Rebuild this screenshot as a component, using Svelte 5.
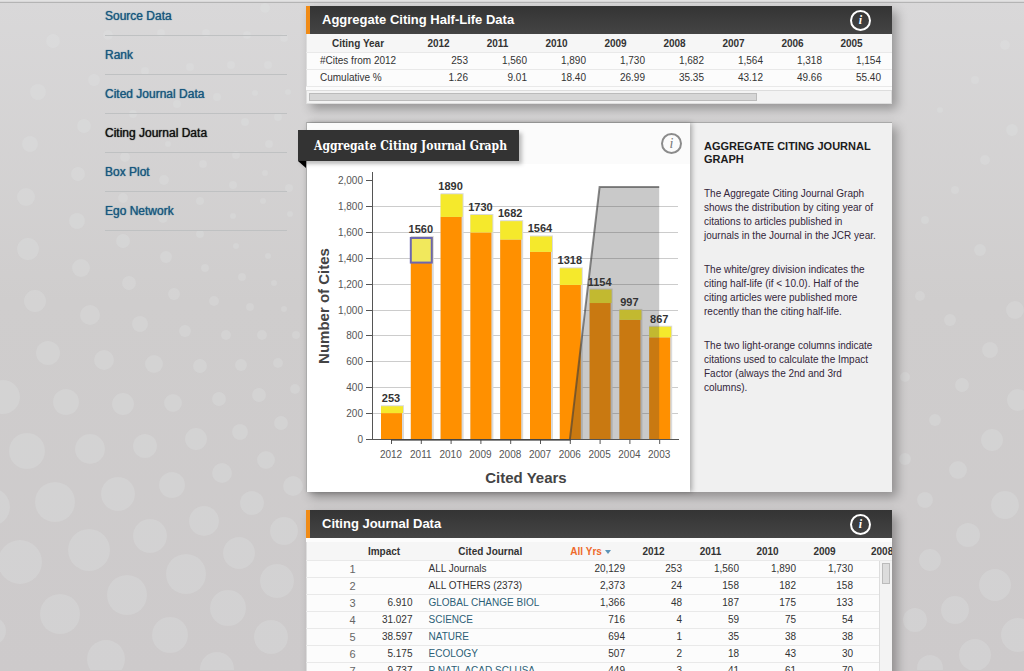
<script lang="ts">
	const nav = ['Source Data', 'Rank', 'Cited Journal Data', 'Citing Journal Data', 'Box Plot', 'Ego Network'];
	let current = $state('Citing Journal Data');

	const halfLife = [
		{ year: 2012, cites: '253', pct: '1.26' },
		{ year: 2011, cites: '1,560', pct: '9.01' },
		{ year: 2010, cites: '1,890', pct: '18.40' },
		{ year: 2009, cites: '1,730', pct: '26.99' },
		{ year: 2008, cites: '1,682', pct: '35.35' },
		{ year: 2007, cites: '1,564', pct: '43.12' },
		{ year: 2006, cites: '1,318', pct: '49.66' },
		{ year: 2005, cites: '1,154', pct: '55.40' }
	];

	const bars = [
		{ year: 2012, total: 253, other: 200 },
		{ year: 2011, total: 1560, other: 1370 },
		{ year: 2010, total: 1890, other: 1715 },
		{ year: 2009, total: 1730, other: 1595 },
		{ year: 2008, total: 1682, other: 1540 },
		{ year: 2007, total: 1564, other: 1445 },
		{ year: 2006, total: 1318, other: 1190 },
		{ year: 2005, total: 1154, other: 1050 },
		{ year: 2004, total: 997, other: 920 },
		{ year: 2003, total: 867, other: 785 }
	];
	let selectedYear = $state(2011);

	const journals = [
		{ impact: '', name: 'ALL Journals', link: false, values: ['20,129', '253', '1,560', '1,890', '1,730'] },
		{ impact: '', name: 'ALL OTHERS (2373)', link: false, values: ['2,373', '24', '158', '182', '158'] },
		{ impact: '6.910', name: 'GLOBAL CHANGE BIOL', link: true, values: ['1,366', '48', '187', '175', '133'] },
		{ impact: '31.027', name: 'SCIENCE', link: true, values: ['716', '4', '59', '75', '54'] },
		{ impact: '38.597', name: 'NATURE', link: true, values: ['694', '1', '35', '38', '38'] },
		{ impact: '5.175', name: 'ECOLOGY', link: true, values: ['507', '2', '18', '43', '30'] },
		{ impact: '9.737', name: 'P NATL ACAD SCI USA', link: true, values: ['449', '3', '41', '61', '70'] }
	];

	// chart geometry
	const axisX = 65;
	const baseY = 316;
	const step = 29.8;
	const ticks = Array.from({ length: 11 }, (_, i) => i * 200);
	const x = (i: number) => axisX + 19 + i * step;
	const y = (v: number) => baseY - v * 0.1295;

	// background bubbles: cx, cy, r
	const dots = [
		[53, 41, 7], [38, 92, 8], [94, 80, 6], [84, 126, 7], [30, 144, 8], [78, 174, 7], [26, 197, 9], [77, 221, 8],
		[108, 35, 5], [161, 33, 4], [206, 33, 4], [247, 35, 4], [284, 38, 4], [145, 71, 4], [190, 67, 4], [231, 65, 4], [268, 65, 4],
		[133, 114, 4], [177, 104, 4], [217, 97, 4], [255, 93, 3], [288, 92, 3], [245, 122, 4], [278, 117, 4], [168, 144, 3],
		[125, 157, 5], [236, 155, 4], [269, 144, 4], [164, 180, 5], [203, 164, 4], [265, 173, 3], [233, 185, 4], [289, 188, 4],
		[123, 198, 5], [200, 201, 4], [263, 201, 3], [290, 214, 3], [233, 216, 3], [163, 218, 5], [200, 234, 4], [265, 8, 5],
		[28, 249, 11], [81, 268, 9], [123, 241, 7], [166, 257, 6], [205, 268, 4], [236, 246, 3], [268, 256, 3],
		[35, 301, 11], [90, 315, 10], [129, 283, 7], [174, 294, 6], [214, 301, 5], [242, 277, 4], [250, 307, 4], [284, 309, 3], [274, 283, 3],
		[48, 353, 12], [104, 360, 10], [140, 324, 8], [185, 331, 6], [226, 335, 5], [262, 335, 5], [296, 335, 4],
		[3, 397, 17], [66, 402, 13], [123, 404, 11], [154, 364, 9], [200, 366, 7], [241, 365, 6], [278, 363, 5],
		[27, 451, 18], [90, 449, 15], [145, 446, 12], [173, 403, 9], [219, 399, 7], [259, 395, 7], [295, 389, 5],
		[-9, 507, 19], [55, 502, 20], [118, 494, 17], [172, 485, 13], [196, 439, 11], [240, 432, 8], [281, 423, 7],
		[20, 562, 22], [89, 550, 21], [150, 536, 17], [204, 521, 15], [222, 473, 10], [266, 460, 9], [293, 486, 10],
		[60, 614, 20], [127, 595, 20], [186, 574, 20], [239, 553, 16], [252, 503, 12], [284, 531, 14],
		[-8, 631, 14], [106, 659, 19], [170, 635, 18], [228, 608, 18], [277, 581, 17], [271, 637, 17], [217, 669, 17],
		[905, 377, 5], [920, 296, 5], [905, 459, 6], [935, 420, 6], [962, 385, 7], [990, 350, 8], [1015, 310, 9],
		[925, 500, 8], [958, 470, 9], [992, 440, 11], [1018, 400, 11], [930, 560, 11], [968, 535, 12], [1005, 505, 14],
		[915, 620, 12], [955, 610, 14], [995, 585, 16], [930, 668, 13], [975, 655, 16], [1018, 635, 17],
		[925, 220, 4], [955, 190, 4], [985, 160, 5], [1012, 130, 6], [940, 110, 3], [975, 80, 4], [1005, 45, 5], [950, 320, 6], [980, 250, 6]
	];
</script>

{#snippet info(label: string)}
	<button class="info" type="button" aria-label={label}>i</button>
{/snippet}

<div class="page">
	<svg class="bubbles" aria-hidden="true">
		{#each dots as [cx, cy, r]}
			<circle {cx} {cy} {r} />
		{/each}
	</svg>

	<nav>
		<ul>
			{#each nav as item}
				<li>
					<a href="#top" class:active={item === current} onclick={() => (current = item)}>{item}</a>
				</li>
			{/each}
		</ul>
	</nav>

	<main>
		<section class="panel">
			<header>
				<h2>Aggregate Citing Half-Life Data</h2>
				{@render info('About half-life data')}
			</header>
			<table class="half-life">
				<colgroup>
					<col />
					{#each halfLife as _}<col class="year" />{/each}
					<col class="spacer" />
				</colgroup>
				<thead>
					<tr>
						<th>Citing Year</th>
						{#each halfLife as h}<th>{h.year}</th>{/each}
						<td></td>
					</tr>
				</thead>
				<tbody>
					<tr>
						<td class="label">#Cites from 2012</td>
						{#each halfLife as h}<td>{h.cites}</td>{/each}
						<td></td>
					</tr>
					<tr>
						<td class="label">Cumulative %</td>
						{#each halfLife as h}<td>{h.pct}</td>{/each}
						<td></td>
					</tr>
				</tbody>
			</table>
			<div class="hscroll"><div class="thumb"></div></div>
		</section>

		<section class="graph">
			<div class="chart">
				<div class="chart-head">
					<h2 class="ribbon">Aggregate Citing Journal Graph</h2>
					{@render info('About this graph')}
				</div>
				<svg viewBox="0 41 383 328" role="img" aria-label="Number of cites by cited year">
					{#each ticks as t}
						{#if t > 0 && t < 2000}
							<line class="grid" x1={axisX} x2="371" y1={Math.round(y(t)) + 0.5} y2={Math.round(y(t)) + 0.5} />
						{/if}
						<line class="axis" x1={axisX - 6} x2={axisX} y1={Math.round(y(t)) + 0.5} y2={Math.round(y(t)) + 0.5} />
						<text class="tick" x={axisX - 9} y={y(t) + 4} text-anchor="end">{t.toLocaleString('en-US')}</text>
					{/each}

					{#each bars as b, i}
						<!-- svelte-ignore a11y_click_events_have_key_events, a11y_no_static_element_interactions -->
						<g class="bar" onclick={() => (selectedYear = b.year)}>
							<rect class="shade" x={x(i) - 10} y={y(b.total) - 1} width="23" height={baseY - y(b.total) + 1} />
							<rect class="other" x={x(i) - 10} y={y(b.other)} width="21" height={baseY - y(b.other)} />
							<rect class="recent" x={x(i) - 10} y={y(b.total)} width="22" height={y(b.other) - y(b.total)} />
							{#if b.year === selectedYear}
								<rect class="selected" x={x(i) - 10} y={y(b.total) + 1} width="21" height={y(b.other) - y(b.total)} />
							{/if}
						</g>
						<line class="axis" x1={x(i) + 0.5} x2={x(i) + 0.5} y1={baseY} y2={baseY + 5} />
						<text class="tick" x={x(i)} y={baseY + 19} text-anchor="middle">{b.year}</text>
					{/each}

					<line class="axis" x1={axisX + 0.5} x2={axisX + 0.5} y1="49" y2={baseY + 1} />
					<line class="axis" x1={axisX} x2="372" y1={baseY + 0.5} y2={baseY + 0.5} />

					<polygon class="area" points="{x(6)},{baseY} {x(7)},64 {x(9)},64 {x(9)},{baseY}" />
					<polyline class="edge" points="{x(0)},{baseY + 1} {x(6)},{baseY + 1} {x(7)},64 {x(9)},64" />

					{#each bars as b, i}
						<text class="value" x={x(i)} y={y(b.total) - 4} text-anchor="middle">{b.total}</text>
					{/each}

					<text class="title" x="219" y="360" text-anchor="middle">Cited Years</text>
					<text class="title" transform="translate(22 183) rotate(-90)" text-anchor="middle">Number of Cites</text>
				</svg>
			</div>
			<aside>
				<h3>AGGREGATE CITING JOURNAL GRAPH</h3>
				<p>
					The Aggregate Citing Journal Graph shows the distribution by citing year of citations to articles
					published in journals in the Journal in the JCR year.
				</p>
				<p>
					The white/grey division indicates the citing half-life (if &lt; 10.0). Half of the citing articles were
					published more recently than the citing half-life.
				</p>
				<p>
					The two light-orange columns indicate citations used to calculate the Impact Factor (always the 2nd and
					3rd columns).
				</p>
			</aside>
		</section>

		<section class="panel">
			<header>
				<h2>Citing Journal Data</h2>
				{@render info('About citing journal data')}
			</header>
			<table class="journals">
				<colgroup>
					<col class="rank-col" />
					<col class="num" />
					<col />
					<col class="num" />
					<col class="num" />
					<col class="num" />
					<col class="num" />
					<col class="num" />
					<col class="cut" />
				</colgroup>
				<thead>
					<tr>
						<td></td>
						<th>Impact</th>
						<th>Cited Journal</th>
						<th class="sorted">All Yrs <span class="arrow"></span></th>
						<th>2012</th>
						<th>2011</th>
						<th>2010</th>
						<th>2009</th>
						<th class="cut-head">2008</th>
					</tr>
				</thead>
				<tbody>
					{#each journals as j, i}
						<tr>
							<td class="rank">{i + 1}</td>
							<td>{j.impact}</td>
							<td class="name">
								{#if j.link}<a href="#top">{j.name}</a>{:else}{j.name}{/if}
							</td>
							{#each j.values as v}<td>{v}</td>{/each}
							<td></td>
						</tr>
					{/each}
				</tbody>
			</table>
			<div class="vscroll"><div class="thumb"></div></div>
		</section>
	</main>
</div>

<style>
	:global(body) {
		margin: 0;
	}

	.page {
		position: relative;
		display: flex;
		align-items: flex-start;
		gap: 19px;
		box-sizing: border-box;
		height: 100vh;
		overflow: hidden;
		padding: 0 132px 0 105px;
		border-top: 1px solid #e2e2e2;
		background: linear-gradient(#d9d8d9, #cfcdcd 45%, #cdcacb);
		font-family: 'Liberation Sans', Arial, sans-serif;
		font-size: 10px;
		color: #333;
	}

	.page::before {
		content: '';
		position: absolute;
		top: 1px;
		left: 0;
		right: 0;
		height: 1px;
		background: #b4b4b4;
	}

	.bubbles {
		position: absolute;
		inset: -1px 0 0 0;
		width: 100%;
		height: 100%;
		fill: rgba(226, 233, 231, 0.25);
	}

	nav {
		position: relative;
		flex: 0 0 182px;
	}

	ul {
		margin: 0;
		padding: 0;
		list-style: none;
	}

	li {
		height: 38px;
		border-bottom: 1px solid #bfc1c2;
	}

	li:first-child {
		height: 34px;
	}

	li a {
		display: block;
		padding-top: 12px;
		font-size: 12px;
		line-height: 14px;
		color: #17587f;
		text-decoration: none;
		text-shadow: 0 0 1px currentColor;
	}

	li:first-child a {
		padding-top: 8px;
	}

	li a.active {
		color: #111;
	}

	main {
		position: relative;
		flex: 1;
		min-width: 0;
		display: flex;
		flex-direction: column;
		gap: 18px;
		padding-top: 5px;
	}

	.panel {
		position: relative;
		overflow: hidden;
		background: #fcfcfc;
		box-shadow: 5px 5px 10px rgba(0, 0, 0, 0.3);
	}

	header {
		display: flex;
		align-items: center;
		justify-content: space-between;
		height: 28px;
		padding: 0 21px 0 12px;
		border-left: 4px solid #f08b16;
		background: linear-gradient(#343434, #444);
	}

	h2 {
		margin: 0;
		font-size: 13px;
		line-height: 16px;
		color: #fff;
	}

	.info {
		box-sizing: border-box;
		width: 21px;
		height: 21px;
		padding: 0;
		border: 2px solid #fff;
		border-radius: 50%;
		background: none;
		color: #fff;
		font: italic bold 12px/16px 'Liberation Serif', 'Times New Roman', serif;
		cursor: pointer;
	}

	table {
		width: 100%;
		table-layout: fixed;
		border-collapse: collapse;
		border-left: 1px solid #ddd;
	}

	th,
	td {
		height: 16px;
		padding: 0;
		border-bottom: 1px solid #e9e9e9;
		line-height: 16px;
		text-align: right;
		white-space: nowrap;
	}

	th {
		padding-top: 2px;
		text-align: center;
	}

	thead {
		background: #f6f6f6;
	}

	.half-life .year {
		width: 59px;
	}

	.half-life .spacer {
		width: 11px;
	}

	.half-life .label {
		padding-left: 13px;
		text-align: left;
	}

	.hscroll {
		margin-top: 3px;
		padding: 2px 0 2px 2px;
		border: 1px solid #ddd;
		background: #f3f3f3;
	}

	.hscroll .thumb {
		box-sizing: border-box;
		width: 77%;
		height: 8px;
		border: 1px solid #bbb;
		background: #d6d6d6;
	}

	.graph {
		display: flex;
		border-top: 1px solid #a9a9a9;
		border-left: 1px solid #b5b5b5;
		background: #f0f0f0;
		box-shadow: 5px 5px 10px rgba(0, 0, 0, 0.3);
	}

	.chart {
		flex: 1;
		min-width: 0;
		background: #fff;
		box-shadow: 2px 0 5px rgba(0, 0, 0, 0.3);
	}

	.chart-head {
		display: flex;
		align-items: center;
		justify-content: space-between;
		height: 41px;
		padding-right: 8px;
		background: #fbfbfb;
	}

	.chart-head .info {
		border-color: #8b8b8b;
		color: #777;
		font-size: 14px;
		font-weight: normal;
	}

	.ribbon {
		position: relative;
		margin: 4px 0 0 -9px;
		padding: 8px 12px 7px 16px;
		background: #333;
		box-shadow: 3px 3px 4px rgba(0, 0, 0, 0.25);
		font-family: 'DejaVu Serif Condensed', 'DejaVu Serif', serif;
		font-size: 12px;
	}

	.ribbon::after {
		content: '';
		position: absolute;
		top: 100%;
		left: 0;
		border-top: 7px solid #000;
		border-left: 8px solid transparent;
	}

	.chart svg {
		display: block;
		width: 100%;
		height: auto;
	}

	.grid {
		stroke: #ccc;
	}

	.axis {
		stroke: #555;
	}

	.tick {
		font-size: 10px;
		fill: #555;
	}

	.value {
		font-size: 11px;
		font-weight: bold;
		fill: #333;
	}

	.title {
		font-size: 15px;
		font-weight: bold;
		fill: #444;
	}

	.bar {
		cursor: pointer;
	}

	.shade {
		fill: #dadada;
	}

	.other {
		fill: #ff9000;
	}

	.recent {
		fill: #f5e92c;
	}

	.selected {
		fill: #f1e85c;
		stroke: #6c66b0;
		stroke-width: 2;
	}

	.area {
		fill: rgba(60, 60, 60, 0.28);
	}

	.edge {
		fill: none;
		stroke: rgba(60, 60, 60, 0.6);
		stroke-width: 2;
	}

	aside {
		box-sizing: border-box;
		flex: 0 0 202px;
		padding: 17px 12px 0 14px;
		color: #33263a;
	}

	h3 {
		margin: 0 0 21px;
		font-size: 11px;
		line-height: 13px;
		color: #1c1c1c;
	}

	p {
		margin: 0 0 20px;
		line-height: 14px;
	}

	.journals {
		border-top: 4px solid #fcfcfc;
	}

	.journals .rank-col {
		width: 49px;
	}

	.journals .num {
		width: 57px;
	}

	.journals .cut {
		width: 39px;
	}

	.journals .cut-head {
		padding-left: 18px;
		text-align: left;
	}

	.journals tbody td {
		padding-top: 0;
	}

	.journals .rank {
		font-size: 11px;
		color: #666;
	}

	.journals .name {
		padding-left: 16px;
		text-align: left;
	}

	.journals a {
		color: #2c5f77;
		text-decoration: none;
	}

	.sorted {
		padding-right: 12px;
		color: #ee6a2c;
	}

	.arrow {
		display: inline-block;
		border: 3px solid transparent;
		border-top: 4px solid #5b93b8;
		border-bottom: 0;
		vertical-align: middle;
	}

	.vscroll {
		position: absolute;
		top: 51px;
		right: 0;
		bottom: 0;
		padding: 2px;
		border-left: 1px solid #ddd;
		background: #f3f3f3;
	}

	.vscroll .thumb {
		box-sizing: border-box;
		width: 8px;
		height: 21px;
		border: 1px solid #bbb;
		background: #dcdcdc;
	}
</style>
